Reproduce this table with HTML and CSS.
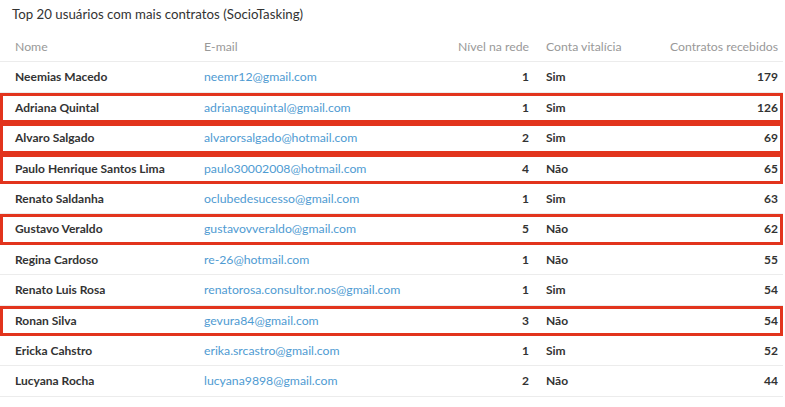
FILE: index.html
```html
<!DOCTYPE html>
<html>
<head>
    <title>Top 20 usuários</title>
    <link rel="stylesheet" href="styles.css">
</head>
<body>
    <div class="panel">
        <h3 class="panel-title">Top 20 usuários com mais contratos (SocioTasking)</h3>

        <div class="users">
            <div class="row head">
                <div>Nome</div>
                <div>E-mail</div>
                <div class="num">Nível na rede</div>
                <div class="vit">Conta vitalícia</div>
                <div class="num">Contratos recebidos</div>
            </div>

            <div class="row">
                <div class="name">Neemias Macedo</div>
                <div class="mail">neemr12@gmail.com</div>
                <div class="num">1</div>
                <div class="vit">Sim</div>
                <div class="num">179</div>
            </div>
            <div class="row marked">
                <div class="name">Adriana Quintal</div>
                <div class="mail">adrianagquintal@gmail.com</div>
                <div class="num">1</div>
                <div class="vit">Sim</div>
                <div class="num">126</div>
            </div>
            <div class="row marked">
                <div class="name">Alvaro Salgado</div>
                <div class="mail">alvarorsalgado@hotmail.com</div>
                <div class="num">2</div>
                <div class="vit">Sim</div>
                <div class="num">69</div>
            </div>
            <div class="row marked">
                <div class="name">Paulo Henrique Santos Lima</div>
                <div class="mail">paulo30002008@hotmail.com</div>
                <div class="num">4</div>
                <div class="vit">Não</div>
                <div class="num">65</div>
            </div>
            <div class="row">
                <div class="name">Renato Saldanha</div>
                <div class="mail">oclubedesucesso@gmail.com</div>
                <div class="num">1</div>
                <div class="vit">Sim</div>
                <div class="num">63</div>
            </div>
            <div class="row marked">
                <div class="name">Gustavo Veraldo</div>
                <div class="mail">gustavovveraldo@gmail.com</div>
                <div class="num">5</div>
                <div class="vit">Não</div>
                <div class="num">62</div>
            </div>
            <div class="row">
                <div class="name">Regina Cardoso</div>
                <div class="mail">re-26@hotmail.com</div>
                <div class="num">1</div>
                <div class="vit">Não</div>
                <div class="num">55</div>
            </div>
            <div class="row">
                <div class="name">Renato Luis Rosa</div>
                <div class="mail">renatorosa.consultor.nos@gmail.com</div>
                <div class="num">1</div>
                <div class="vit">Sim</div>
                <div class="num">54</div>
            </div>
            <div class="row marked">
                <div class="name">Ronan Silva</div>
                <div class="mail">gevura84@gmail.com</div>
                <div class="num">3</div>
                <div class="vit">Não</div>
                <div class="num">54</div>
            </div>
            <div class="row">
                <div class="name">Ericka Cahstro</div>
                <div class="mail">erika.srcastro@gmail.com</div>
                <div class="num">1</div>
                <div class="vit">Sim</div>
                <div class="num">52</div>
            </div>
            <div class="row">
                <div class="name">Lucyana Rocha</div>
                <div class="mail">lucyana9898@gmail.com</div>
                <div class="num">2</div>
                <div class="vit">Não</div>
                <div class="num">44</div>
            </div>
        </div>
    </div>
</body>
</html>
```

FILE: styles.css
```css
body {
    margin: 0;
    font-family: Lato, "Open Sans", sans-serif;
    font-size: 12.25px;
    color: #333;
    background: #fff;
}

.panel {
    width: 783px;
}

.panel-title {
    margin: 0;
    padding: 6px 12px 0;
    height: 26px;
    font-size: 13.25px;
    font-weight: normal;
    line-height: 17px;
    color: #333;
}

.row {
    display: grid;
    grid-template-columns: 189px 240px 85px 117px 1fr;
    align-items: center;
    padding: 6px 5px 6px 15px;
    border-bottom: 1px solid #ececec;
    line-height: 17.4px;
    font-size: 12px;
    font-weight: bold;
}

.row .num {
    text-align: right;
}

.row .vit {
    padding-left: 17px;
}

.row.head {
    font-size: 12.25px;
    font-weight: normal;
    color: #999;
}

.mail {
    font-size: 12.25px;
    font-weight: normal;
    color: #4f9bd2;
}

.marked {
    outline: 3px solid #e2341d;
    outline-offset: -3px;
}
```
